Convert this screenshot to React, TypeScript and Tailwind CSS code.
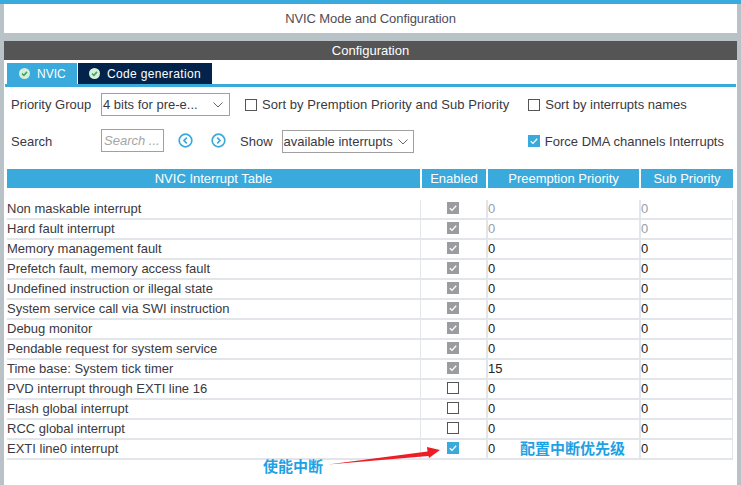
import React from "react";

const BASE = "[font-family:'Liberation_Sans',Arial,sans-serif]";

type Row = { name: string; check: "off" | "locked" | "on"; pre: string; sub: string; dim?: boolean };
const rows: Row[] = [
  { name: "Non maskable interrupt", check: "locked", pre: "0", sub: "0", dim: true },
  { name: "Hard fault interrupt", check: "locked", pre: "0", sub: "0", dim: true },
  { name: "Memory management fault", check: "locked", pre: "0", sub: "0" },
  { name: "Prefetch fault, memory access fault", check: "locked", pre: "0", sub: "0" },
  { name: "Undefined instruction or illegal state", check: "locked", pre: "0", sub: "0" },
  { name: "System service call via SWI instruction", check: "locked", pre: "0", sub: "0" },
  { name: "Debug monitor", check: "locked", pre: "0", sub: "0" },
  { name: "Pendable request for system service", check: "locked", pre: "0", sub: "0" },
  { name: "Time base: System tick timer", check: "locked", pre: "15", sub: "0" },
  { name: "PVD interrupt through EXTI line 16", check: "off", pre: "0", sub: "0" },
  { name: "Flash global interrupt", check: "off", pre: "0", sub: "0" },
  { name: "RCC global interrupt", check: "off", pre: "0", sub: "0" },
  { name: "EXTI line0 interrupt", check: "on", pre: "0", sub: "0" },
];

function Box({ state }: { state: "off" | "locked" | "on" }) {
  if (state === "off") return <span className="block w-3 h-3 border border-[#555] bg-white" />;
  return (
    <span className={`flex w-3 h-3 items-center justify-center ${state === "on" ? "bg-[#3aa9dc]" : "bg-[#9a9c9f]"}`}>
      <svg width="10" height="10" viewBox="0 0 10 10">
        <path d="M1.8 5.2 L4 7.4 L8.2 2.8" fill="none" stroke="white" strokeWidth="1.3" />
      </svg>
    </span>
  );
}

function TabCheck() {
  return (
    <svg width="11" height="11" viewBox="0 0 11 11" className="shrink-0">
      <circle cx="5.5" cy="5.5" r="5.5" fill="#d4f0dc" />
      <path d="M3 5.6 L4.9 7.4 L8 3.9" fill="none" stroke="#3fa860" strokeWidth="1.6" />
    </svg>
  );
}

function Chevron() {
  return (
    <svg width="10" height="6" viewBox="0 0 10 6" className="shrink-0">
      <path d="M0.5 0.5 L5 5 L9.5 0.5" fill="none" stroke="#666" strokeWidth="1" />
    </svg>
  );
}

function Nav({ dir }: { dir: "l" | "r" }) {
  return (
    <svg width="15" height="15" viewBox="0 0 15 15" className="shrink-0 block">
      <circle cx="7.5" cy="7.5" r="6.3" fill="none" stroke="#3aa9dc" strokeWidth="1.7" />
      <path d={dir === "l" ? "M8.8 4.7 L6 7.5 L8.8 10.3" : "M6.2 4.7 L9 7.5 L6.2 10.3"} fill="none" stroke="#3aa9dc" strokeWidth="1.7" />
    </svg>
  );
}

export default function App() {
  return (
    <div className={`${BASE} relative w-[741px] h-[485px] overflow-hidden bg-[#b8c2c7] pt-1 pl-1 pr-1 text-[13px] text-[#39393f]`}>
      <div className="absolute left-0 top-0 w-full h-1 bg-[#3aa9dc]" />
      <div className="w-[733px] h-[29px] bg-white flex items-center justify-center text-[#4d4d55]">
        <span className="tracking-[-0.1px]">NVIC Mode and Configuration</span>
      </div>
      <div className="mt-2 w-[733px] h-[444px] bg-white flex flex-col">
        <div className="h-[19px] bg-[#545554] text-white flex items-center justify-center">Configuration</div>
        <div className="flex gap-px pl-[2px] pt-[3px] ml-px w-[731px] border-b-[3px] border-[#3aa9dc] text-[12px]">
          <div className="w-[70px] h-[21px] bg-[#3aa9dc] text-white flex items-center gap-[7px] pl-[12px]">
            <TabCheck />
            <span>NVIC</span>
          </div>
          <div className="w-[134px] h-[21px] bg-[#03234b] text-white flex items-center gap-[7px] pl-[11px]">
            <TabCheck />
            <span className="tracking-[0.35px]">Code generation</span>
          </div>
        </div>
        <div className="flex items-center h-[23px] mt-[6px] pl-[7px]">
          <span className="w-[90px]">Priority Group</span>
          <div className="w-[129px] h-[23px] border border-[#a0a0a0] flex items-center justify-between pl-[1px] pr-[6px]">
            <span>4 bits for pre-e...</span>
            <Chevron />
          </div>
          <span className="ml-[15px] block w-3 h-3 border border-[#555]" />
          <span className="ml-[5px] tracking-[0.07px]">Sort by Premption Priority and Sub Priority</span>
          <span className="ml-[19px] block w-3 h-3 border border-[#555]" />
          <span className="ml-[5px]">Sort by interrupts names</span>
        </div>
        <div className="flex items-center h-[23px] mt-[13px] pl-[7px]">
          <span className="w-[90px] mt-[2px]">Search</span>
          <div className="w-[63px] h-[23px] border border-[#a0a0a0] flex items-center pl-[2px] italic text-[#a5a5a5] whitespace-nowrap">Search ...</div>
          <span className="ml-[14px]"><Nav dir="l" /></span>
          <span className="ml-[18px]"><Nav dir="r" /></span>
          <span className="ml-[14px] mt-[2px]">Show</span>
          <div className="ml-[9px] mt-[2px] w-[132px] h-[23px] border border-[#a0a0a0] flex items-center justify-between pl-[1px] pr-[5px]">
            <span>available interrupts</span>
            <Chevron />
          </div>
          <span className="ml-auto"><Box state="on" /></span>
          <span className="ml-[5px] mr-[13px] mt-[2px]">Force DMA channels Interrupts</span>
        </div>

        <div className="mt-[17px] ml-[3px] w-[726px] grid grid-cols-[413px_2px_64px_2px_151px_2px_92px] text-white h-[19px] leading-[19px] text-center">
          <div className="bg-[#3aa9dc]">NVIC Interrupt Table</div>
          <div />
          <div className="bg-[#3aa9dc]">Enabled</div>
          <div />
          <div className="bg-[#3aa9dc]">Preemption Priority</div>
          <div />
          <div className="bg-[#3aa9dc]">Sub Priority</div>
        </div>

        <div className="mt-[12px] ml-[3px] w-[726px]">
          {rows.map((r) => (
            <div key={r.name} className="grid grid-cols-[413px_66px_153px_94px] h-[20px] border-b-2 border-[#e2e5ea]">
              <div className="leading-[18px] whitespace-nowrap">{r.name}</div>
              <div className="border-l border-[#e2e5ea] flex items-center justify-center pr-[2px] pb-[2px]">
                <Box state={r.check} />
              </div>
              <div className={`border-l-2 border-[#e2e5ea] leading-[18px] ${r.dim ? "text-[#9aa0a8]" : "text-[#222]"}`}>{r.pre}</div>
              <div className={`border-l-2 border-r border-[#e2e5ea] leading-[18px] ${r.dim ? "text-[#9aa0a8]" : "text-[#222]"}`}>{r.sub}</div>
            </div>
          ))}
        </div>
      </div>

      <svg className="absolute left-[320px] top-[440px]" width="130" height="30" viewBox="320 440 130 30">
        <path d="M328 464.5 L427.5 451.5 L427 447 L440 450 L429 458 L428.5 456 Z" fill="#ee1c25" />
      </svg>
      <span className="absolute left-[263px] top-[457px] text-[15px] leading-[18px] font-bold text-[#1da2e4] [font-family:'Noto_Sans_CJK_SC',sans-serif]">使能中断</span>
      <span className="absolute left-[520px] top-[439px] text-[15px] leading-[18px] font-bold text-[#1da2e4] [font-family:'Noto_Sans_CJK_SC',sans-serif]">配置中断优先级</span>
    </div>
  );
}
